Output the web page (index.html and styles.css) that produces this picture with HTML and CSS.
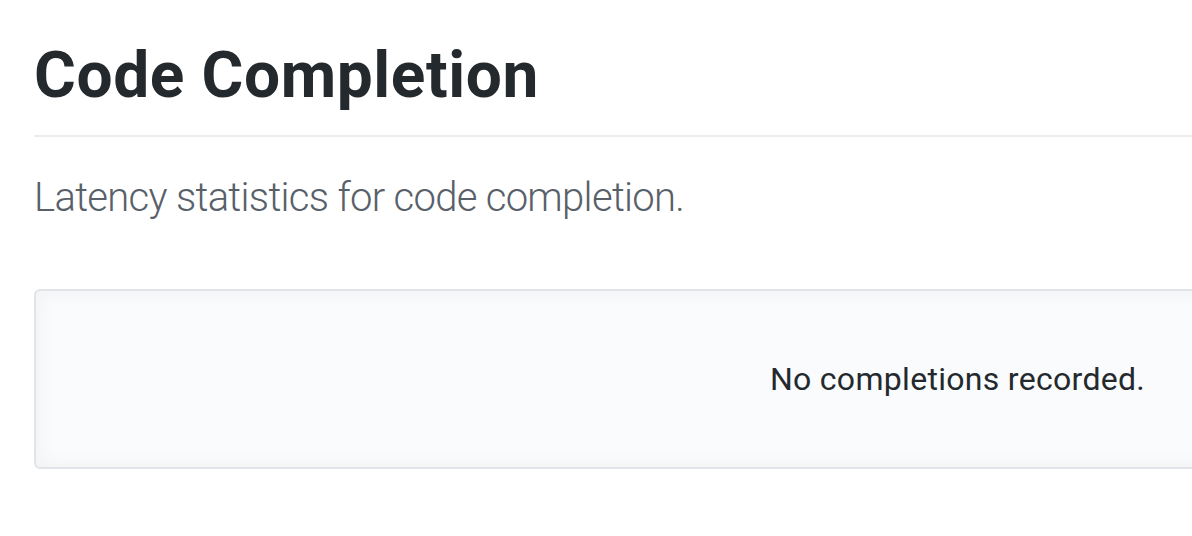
FILE: index.html
```html
<!DOCTYPE html>
<html lang="en">
<head>
<meta charset="utf-8">
<title>Code Completion</title>
<link rel="stylesheet" href="styles.css">
</head>
<body>
<main class="page">
  <h1 class="title">Code Completion</h1>
  <p class="lead">Latency statistics for code completion.</p>
  <div class="blankslate">
    <p class="blankslate-text">No completions recorded.</p>
  </div>
</main>
</body>
</html>
```

FILE: styles.css
```css
html, body {
  margin: 0;
  padding: 0;
  background: #ffffff;
  overflow: hidden;
}

body {
  font-family: Roboto, "Liberation Sans", Arial, sans-serif;
  color: #24292e;
}

.page {
  width: 1847px;
  padding: 36px 0 0 34px;
}

.title {
  margin: 0 0 31px 0;
  font-size: 64px;
  line-height: 80px;
  font-weight: 700;
  letter-spacing: 0.6px;
  color: #24292e;
  padding-bottom: 19px;
  border-bottom: 2px solid #eaecef;
}

.lead {
  margin: 0 0 61px 0;
  font-size: 40px;
  line-height: 60px;
  font-weight: 300;
  letter-spacing: -0.7px;
  color: #586069;
}

.blankslate {
  border: 2px solid #e1e4e8;
  border-radius: 6px;
  background: #fafbfc;
  box-shadow: inset 0 0 20px rgba(27, 31, 35, 0.05);
  padding: 64px;
  text-align: center;
}

.blankslate-text {
  margin: 0;
  font-size: 32px;
  line-height: 48px;
  letter-spacing: 0.3px;
  color: #24292e;
}
```
